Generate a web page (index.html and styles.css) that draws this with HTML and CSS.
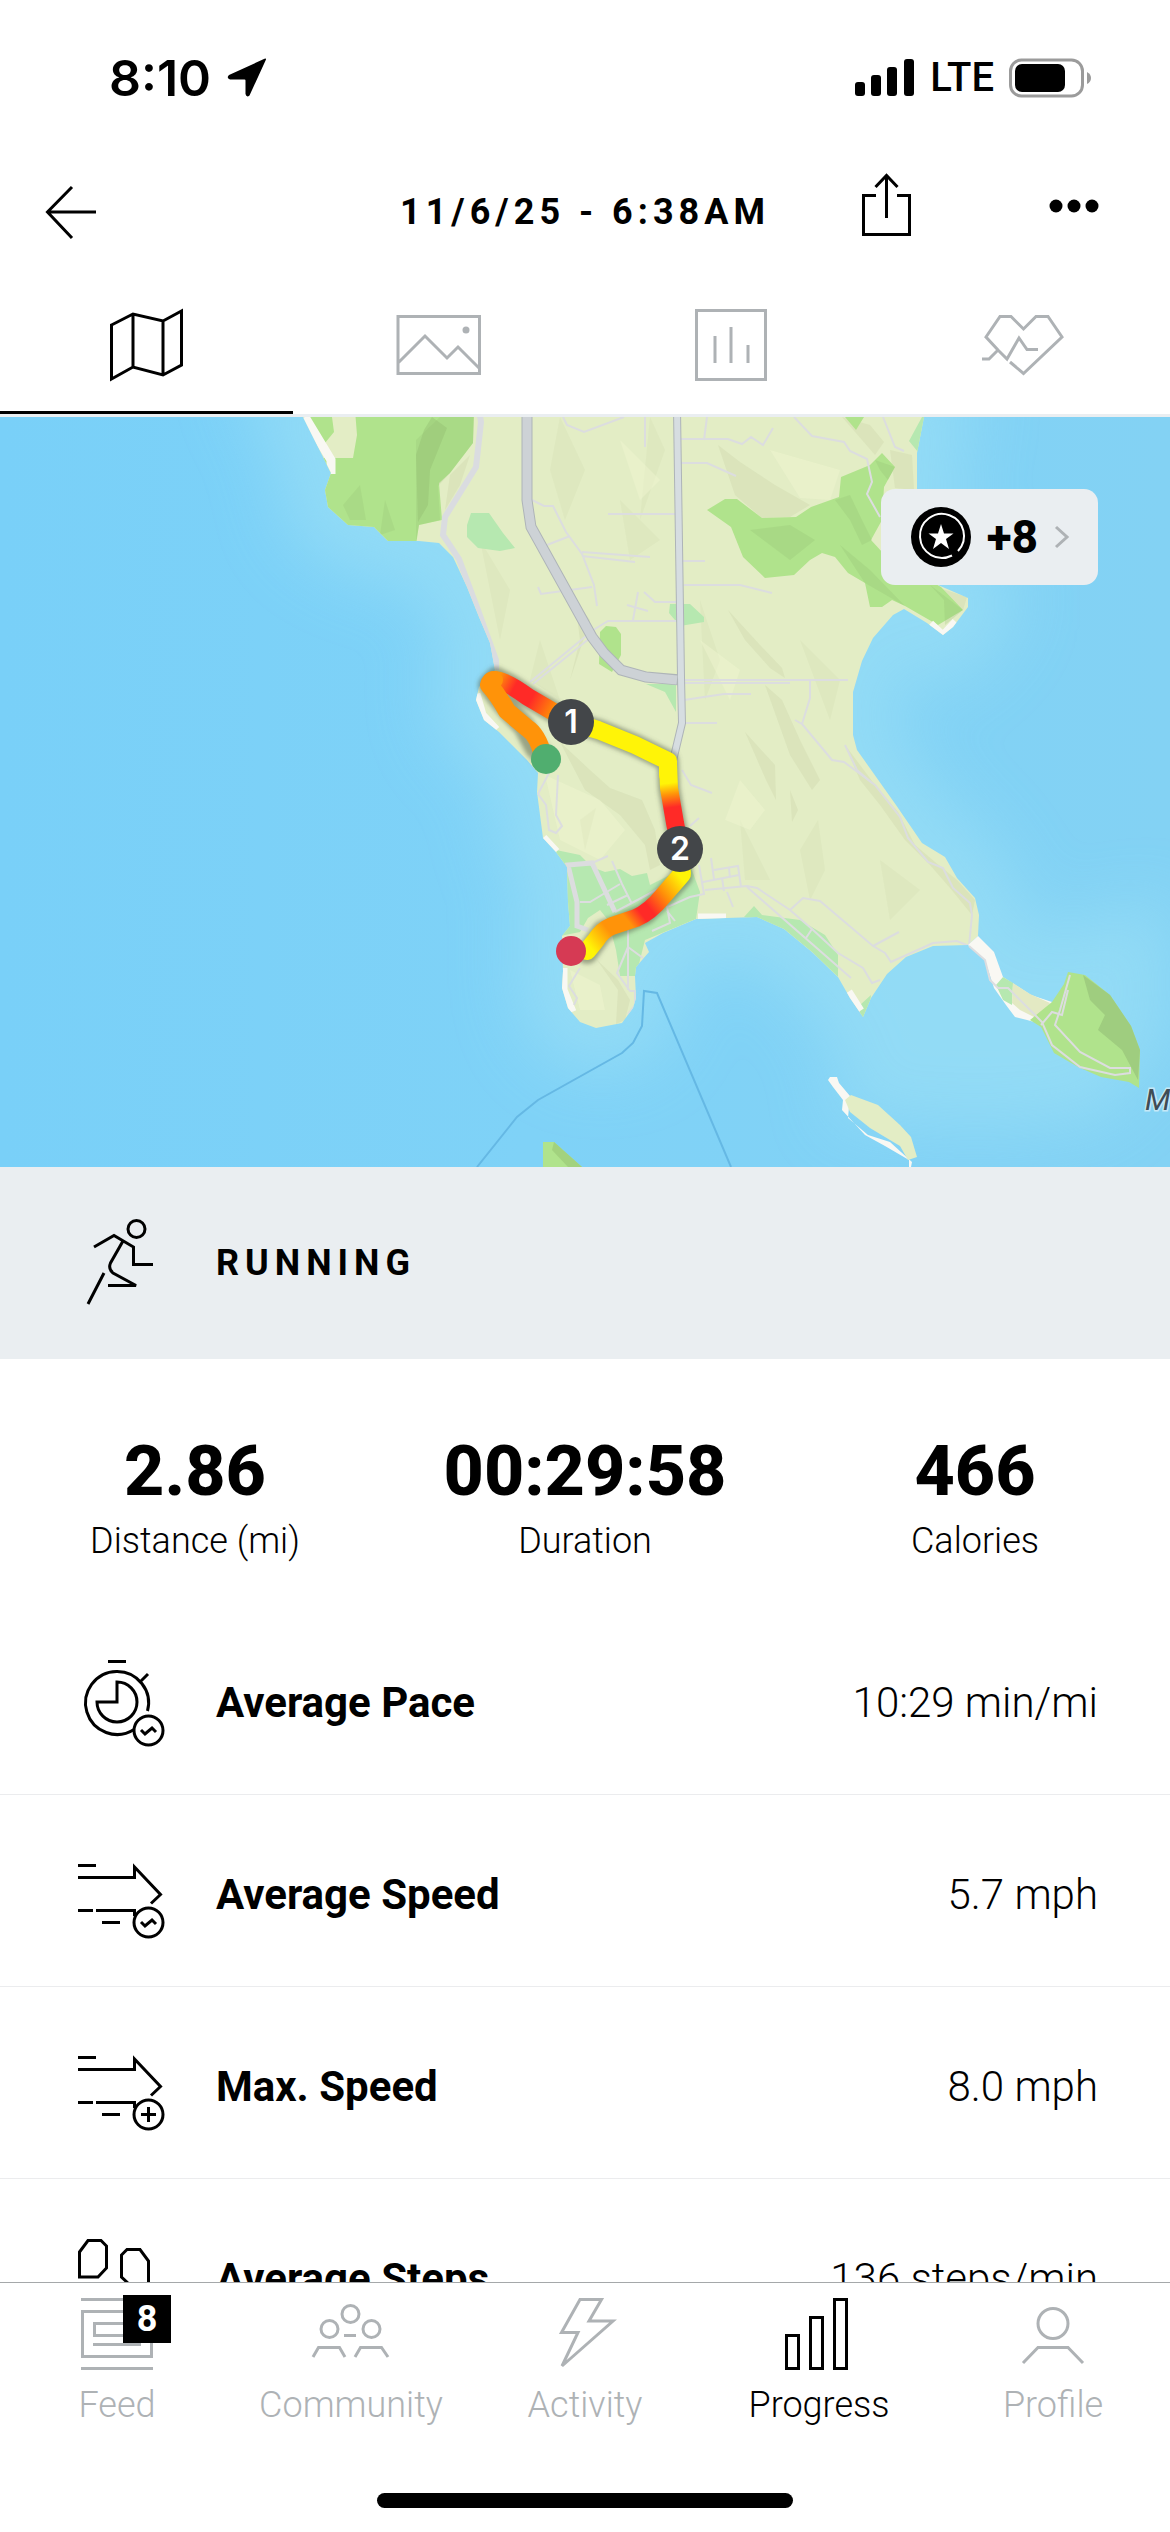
FILE: index.html
```html
<!DOCTYPE html>
<html lang="en">
<head>
    <meta charset="UTF-8">
    <meta name="viewport" content="width=device-width, initial-scale=1.0">
    <title>Running - 11/6/25</title>
    <link rel="stylesheet" href="styles.css">
</head>
<body>
<div class="app">

    <!-- Status bar -->
    <div class="status-bar">
        <span class="status-time">8:10</span>
        <svg class="status-location" width="40" height="40" viewBox="0 0 40 40">
            <path d="M39 1.500Q39.500 0 37.500 .8L2 17Q-1 20 3 21.500H17.500Q18.500 21.500 18.500 22.500V36Q19.500 40 22.500 37.500Z"/>
        </svg>
        <div class="status-right">
            <svg width="60" height="40" viewBox="0 0 60 40">
                <rect x="0" y="24" width="10" height="14" rx="3"/>
                <rect x="16" y="17" width="10" height="21" rx="3"/>
                <rect x="32" y="9" width="10" height="29" rx="3"/>
                <rect x="49" y="1" width="10" height="37" rx="3"/>
            </svg>
            <span class="status-network">LTE</span>
            <svg width="83" height="40" viewBox="0 0 83 40">
                <rect x="1.500" y="2" width="72" height="36" rx="11" fill="none" stroke="#9b9b9b" stroke-width="3"/>
                <rect x="6" y="6" width="50" height="28" rx="7"/>
                <path d="M78 14Q82 16 82 20T78 26Z" fill="#9b9b9b"/>
            </svg>
        </div>
    </div>

    <!-- Header -->
    <header class="header">
        <button class="icon-button" aria-label="Back">
            <svg class="line-icon" width="60" height="60" viewBox="0 0 60 60">
                <path d="M54 30H6M30 5L5.500 30 30 56"/>
            </svg>
        </button>
        <h1 class="title">11/6/25 - 6:38AM</h1>
        <div class="header-actions">
            <button class="icon-button" aria-label="Share">
                <svg class="line-icon" width="60" height="80" viewBox="0 0 60 80">
                    <path d="M20 23.500H7.500V62.500H53.500V23.500H41M30.500 46V4M19.500 15L30.500 3.500 41.500 15"/>
                </svg>
            </button>
            <button class="icon-button" aria-label="More">
                <svg width="60" height="80" viewBox="0 0 60 80">
                    <circle cx="12" cy="34" r="6.500"/>
                    <circle cx="30" cy="34" r="6.500"/>
                    <circle cx="48" cy="34" r="6.500"/>
                </svg>
            </button>
        </div>
    </header>

    <!-- Workout tabs -->
    <div class="tabs">
        <button class="tab active" aria-label="Map">
            <svg class="line-icon" width="96" height="80" viewBox="98 305 96 80">
                <path d="M111.500 325L133 314 163 321 181.500 311V365L163 375 133 367 111.500 379ZM133 314V367M163 321V375"/>
            </svg>
        </button>
        <button class="tab" aria-label="Photos">
            <svg class="line-icon" width="96" height="80" viewBox="391 305 96 80">
                <path d="M398 316.500H479.500V373.500H398ZM398 363L425 336 447 358 458 347 479 368"/>
                <circle cx="466" cy="330" r="3.500" fill="currentColor" stroke="none"/>
            </svg>
        </button>
        <button class="tab" aria-label="Charts">
            <svg class="line-icon" width="96" height="80" viewBox="683 305 96 80">
                <path d="M696.500 310.500H765.500V379.500H696.500ZM715 336V363M731 327V363M748 345V363"/>
            </svg>
        </button>
        <button class="tab" aria-label="Heart rate">
            <svg class="line-icon" width="96" height="80" viewBox="976 305 96 80">
                <path d="M998 350L986 337 1000 316.500H1011L1023.500 329 1036 316.500H1048L1062 337 1023.500 373.500 1010 362M982 359H989L998 350 1007 359 1019 338 1027 349.500H1038"/>
            </svg>
        </button>
    </div>

    <main class="content">

        <!-- Route map -->
        <div class="map">
            <svg class="map-canvas" viewBox="0 417 1170 750" preserveAspectRatio="xMidYMid slice" role="img" aria-label="Route map">
                <defs>
                    <linearGradient id="water" x1="0" x2="1" y1="0" y2="0">
                        <stop offset="0" stop-color="#79d0f8"/>
                        <stop offset=".45" stop-color="#7fd2f7"/>
                        <stop offset="1" stop-color="#83d2f4"/>
                    </linearGradient>
                    <linearGradient id="paceNorth" gradientUnits="userSpaceOnUse" x1="490" y1="678" x2="571" y2="722">
                        <stop offset=".08" stop-color="#ff9309"/>
                        <stop offset=".28" stop-color="#ff2a27"/>
                        <stop offset=".5" stop-color="#ff2a27"/>
                        <stop offset=".75" stop-color="#ff8409"/>
                        <stop offset="1" stop-color="#fff407"/>
                    </linearGradient>
                    <linearGradient id="paceEast" gradientUnits="userSpaceOnUse" x1="668" y1="761" x2="680" y2="848">
                        <stop offset=".25" stop-color="#fff407"/>
                        <stop offset=".38" stop-color="#ff9309"/>
                        <stop offset=".53" stop-color="#ff2a27"/>
                        <stop offset="1" stop-color="#ff2a27"/>
                    </linearGradient>
                    <linearGradient id="paceSouth" gradientUnits="userSpaceOnUse" x1="684" y1="876" x2="587" y2="953">
                        <stop offset=".03" stop-color="#fff407"/>
                        <stop offset=".22" stop-color="#ff8f09"/>
                        <stop offset=".38" stop-color="#ff2a27"/>
                        <stop offset=".46" stop-color="#ff2a27"/>
                        <stop offset=".58" stop-color="#ff9309"/>
                        <stop offset=".75" stop-color="#ff9309"/>
                        <stop offset=".95" stop-color="#fff407"/>
                    </linearGradient>
                    <filter id="haze" x="-30%" y="-30%" width="160%" height="160%">
                        <feGaussianBlur stdDeviation="32"/>
                    </filter>
                    <filter id="routeShadow" x="-20%" y="-20%" width="140%" height="140%">
                        <feGaussianBlur stdDeviation="2"/>
                    </filter>
                    <path id="land" d="M303 417L331 473 325 490 328 507 348 525 374 527 388 541 419 541 439 543 453 557 467 587 479 617 490 643 495 670 479 687 476 700 484 720 499 732 527 760 538 773 537 792 543 838 556 852 567 867 568 902 570 926 562 936 563 971 562 988 568 1008 580 1022 596 1028 622 1023 633 1008 636 998 635 976 636 967 649 952 645 943 663 933 696 919 757 917 784 929 812 952 838 977 850 998 863 1017 871 998 887 974 906 957 933 946 968 945 978 936 979 915 975 898 957 878 945 857 922 843 896 805 857 750 853 735 853 692 862 661 873 638 893 615 904 609 927 623 943 635 953 627 968 607 968 598 938 585 917 560 917 453 924 417Z"/>
                    <clipPath id="landClip">
                        <use href="#land"/>
                    </clipPath>
                </defs>

                <!-- Water, lighter near the shore -->
                <rect x="0" y="417" width="1170" height="750" fill="url(#water)"/>
                <g filter="url(#haze)" opacity=".75">
                    <use href="#land" fill="#98def6" stroke="#98def6" stroke-width="90"/>
                    <path fill="#98def6" d="M880 960L1170 900V1040L1100 1120 980 1130 830 1120Z"/>
                </g>

                <!-- Land -->
                <g clip-path="url(#landClip)">
                    <rect x="290" y="417" width="700" height="620" fill="#e3edc5"/>
                    <g fill="#a9b183" opacity=".14">
                        <path d="M718 445L740 462 775 485 810 505 790 517 762 518 735 495ZM842 417L870 425 884 442 875 455 862 440ZM890 450L912 455 914 490 895 488ZM930 585L967 597 963 610 941 598Z"/>
                        <path d="M728 610L760 645 782 668 785 678 770 668 745 640ZM765 685L782 700 800 740 820 780 812 790 790 755ZM745 732L775 765 776 800 766 780ZM790 790L798 810 792 822ZM845 745L875 785 898 812 915 845 935 862 957 880 975 900 972 915 950 888 930 865 905 840 880 805 860 780Z"/>
                        <path d="M560 742L590 770 610 788 642 800 655 830 660 865 650 870 645 845 620 815 585 790ZM580 820L596 808 585 850ZM597 960L618 980 630 1000 625 1020 616 1024 618 990ZM450 475L470 455 460 485 445 510ZM575 600L590 620 570 680 580 640Z"/>
                    </g>
                    <g fill="#a9b183" opacity=".08">
                        <path d="M650 417L665 450 640 520ZM560 417L585 470 565 520 550 470ZM540 640L560 700 530 680ZM700 600L720 660 705 700ZM620 500L660 540 630 560ZM800 640L840 680 830 720ZM800 850L818 820 825 870 810 900ZM740 820L770 880 745 880ZM880 860L920 890 890 920ZM480 540L510 590 500 640Z"/>
                    </g>
                    <g fill="#f0f7d0" opacity=".45">
                        <path d="M545 775L600 800 625 830 600 860 560 840ZM700 640L740 670 730 700ZM770 450L840 470 830 500 800 498ZM620 440L660 480 640 500ZM740 780L765 810 750 830 725 820ZM570 970L600 985 605 1010 580 1010Z"/>
                    </g>

                    <!-- Woods -->
                    <path fill="#b0e38c" d="M320 458L353 458 357 435 355 410H474L473 443 450 473 439 483 442 520 419 525 416 545H320ZM308 417H332L334 432 325 443Z"/>
                    <g fill="#8fb86c">
                        <path opacity=".2" d="M416 440L440 417H474L473 443 450 473 438 486 440 520 419 525 416 541ZM343 505L360 485 366 520 350 520ZM385 500L395 530 380 535Z"/>
                        <path opacity=".35" d="M416 455L424 430 432 417 447 428 430 470 428 505 418 522Z"/>
                    </g>
                    <path fill="#b0e38c" d="M707 510L725 499 737 499 762 518 796 517 811 507 839 497 841 477 870 465 882 453 895 467 884 487 882 520 871 540 883 553 920 575 941 587 963 610 938 625 905 606 892 600 882 607 870 607 865 583 848 573 835 557 822 553 810 560 794 575 765 578 743 557 731 527ZM845 417H864L856 430Z"/>
                    <g fill="#8fb86c" opacity=".22">
                        <path d="M835 500L850 495 862 520 872 540 862 545 850 520ZM875 460L895 467 888 480 880 470ZM930 585L963 610 945 625 944 600ZM750 530L790 525 815 540 790 560ZM840 545L870 570 905 606 865 583Z"/>
                    </g>

                    <!-- Parks -->
                    <g fill="#b6e8b0">
                        <path d="M467 525L471 513H489L503 533 515 548 500 551 478 548 467 537ZM670 604H690L704 617V622L680 626 669 613ZM646 684H676V712L665 692ZM909 441L922 417H930V452H918ZM556 850L580 855 592 867 605 872 620 869 632 876 647 873 650 885 690 865 700 892 696 919 645 940 636 976H620L616 950 608 920 600 910 588 918 580 932 560 936V890ZM744 917L754 906 762 915 800 920 825 935 838 955V977L812 952 784 929ZM860 1005L871 995 868 1018H860Z"/>
                    </g>
                    <path fill="#b0e38c" d="M600 632L606 626 616 627 621 634V655L612 672 599 664Z"/>

                    <!-- Beaches -->
                    <g fill="none" stroke="#f9f8f3" stroke-width="9">
                        <path d="M305 417L331 460V474M476 694L482 715 496 730M543 838L556 852M698 918H726M563 968V990L572 1012M848 992L860 1011M930 624L943 636 956 622"/>
                    </g>

                    <!-- Small streets -->
                    <g fill="none" stroke="#dcdddf" stroke-width="2">
                        <path d="M563 417L567 425 584 432 624 417M645 417V447M532 500L544 506H553L566 532 582 554 594 585 597 606M547 545L570 536M582 552L650 557M582 556L635 562M538 587L541 594 592 587M608 514H675M590 632L608 621H676M633 620L638 592M627 605L648 611M644 592L655 602H676M586 636L530 682M590 638L533 684M681 439H728L742 444 751 437 763 445 773 428M704 440L707 417M681 463H707L736 476M681 561H705M684 585H740L772 593M682 680H848M682 683H790M684 700L724 694H751M682 723H717M794 417L812 436 844 442 850 451 867 459 872 482 867 494 880 517M883 417L895 447 904 451M810 680V698L802 724 832 760 844 762 875 785 900 817 908 838 928 862 943 868 953 888 970 903 972 915 969 946"/>
                        <path d="M795 720L802 724M682 770L691 785 712 793M845 745L857 770 872 783M549 773L538 794 546 805 549 830 556 833 562 826 556 815 558 775M690 826L699 818"/>
                        <path d="M711 858L714 879M703 882L739 875M714 870L738 866 741 887M729 868L730 878M722 878L724 891M727 892L733 907M705 890L747 886 757 888 790 910 812 929 838 953 863 968 872 983 880 980M747 887L851 978M806 938L812 929M790 910L803 898 820 901 873 946 885 953 891 962 933 943 957 941 969 946M873 946L899 932M699 865L704 894 690 897 667 907 670 923 652 931M667 911L675 921M612 861L622 884 632 904M592 863L608 856M580 902H590L620 884M607 905L628 895M615 912L660 888M628 947L617 973 630 991H645M628 930V990M628 947L643 958M635 991V1005L628 1014M580 968L569 986 577 998 574 1005"/>
                    </g>
                    <path fill="none" stroke="#dcdddf" stroke-width="5" d="M588 930L577 926 577 902 568 865 592 863 615 912"/>

                    <!-- Main roads -->
                    <path class="road-minor" d="M479 410L481 422 476 467 445 517 443 535 459 559 478 610 496 660V670"/>
                    <path class="road-edge" d="M677 410L681 677 682 723 672 765"/>
                    <path class="road-edge wide" d="M527 410V500L531 527 592 637 604 653 621 670 646 677 681 680"/>
                    <path class="road-fill" d="M677 410L681 677 682 723 672 765"/>
                    <path class="road-fill wide" d="M527 410V500L531 527 592 637 604 653 621 670 646 677 677 680"/>
                </g>

                <!-- Islands -->
                <path fill="#f9f8f3" d="M978 936L994 952 1003 977 1031 995 1052 1002 1045 1025 1027 1020 1015 1017 1006 1005 994 988 985 960 968 945Z"/>
                <path fill="#b6e8b0" d="M1003 977L1013 983 1012 1005 1003 1000 996 985Z"/>
                <path fill="#e3e9c3" d="M1013 983L1030 994 1050 1003 1040 1020 1020 1010 1012 1003Z"/>
                <path fill="#b0e38c" d="M1068 972L1085 975 1110 995 1131 1026 1140 1050 1139 1088 1129 1082 1101 1077 1078 1067 1054 1053 1041 1027 1030 1020 1052 1002 1064 984Z"/>
                <path fill="#9fcd7f" d="M1083 975L1110 995 1131 1026 1140 1050 1138 1080 1122 1050 1098 1030 1105 1015 1090 1000Z"/>
                <path fill="none" stroke="#dcdddf" stroke-width="2" d="M969 946L985 960 990 980 998 988H1008L1030 1010 1042 1022 1052 1045 1080 1067 1115 1075 1130 1073V1068H1110L1080 1052 1055 1025 1060 1010 1070 975M1041 1025L1052 1012 1062 1015 1068 990"/>
                <path fill="#f9f8f3" d="M828 1080L830 1077H837L839 1083 850 1096 848 1118 868 1135 890 1142 912 1162 911 1167H909V1160L885 1146 865 1135 842 1110 843 1100 833 1087Z"/>
                <path fill="#e3edc5" d="M845 1100L851 1095 878 1105 900 1125 911 1137 917 1157 908 1160 900 1146 870 1128 850 1112Z"/>
                <path fill="#b0e38c" d="M543 1142H554L582 1167H543Z"/>
                <path fill="#a2d27e" d="M554 1142L582 1167H568L552 1150Z"/>

                <!-- Ferry routes -->
                <path fill="none" stroke="#65b8e4" stroke-width="2" d="M477 1167L517 1117 538 1100 622 1053 633 1043 642 1026 644 991 657 993 731 1167"/>

                <!-- Run route -->
                <g fill="none" stroke-linecap="round" stroke-linejoin="round">
                    <path filter="url(#routeShadow)" stroke="#5d6650" stroke-opacity=".55" stroke-width="22" d="M546 759L535 747 524 726 510 712 496 695 489 685 496 678 510 685 528 697 552 711 571 722 598 730 635 745 668 761 669 788 675 823 680 848 682 876 663 897 645 914 617 926 603 931 587 953"/>
                    <path stroke="url(#paceSouth)" stroke-width="18" d="M680 850L682 874 663 896Q650 912 636 918L612 926Q602 930 596 940L587 951"/>
                    <path stroke="url(#paceEast)" stroke-width="18" d="M668 764L669 788 675 823 680 848"/>
                    <path stroke="#fff407" stroke-width="18" d="M571 722L598 730 635 745 668 761V775"/>
                    <path stroke="url(#paceNorth)" stroke-width="18" d="M494 680Q505 680 528 697L552 711 571 722"/>
                    <path stroke="#ff9309" stroke-width="18" d="M543 756Q538 735 527 728L507 711Q498 695 489 685 490 680 494 680"/>
                </g>
                <circle cx="546" cy="759" r="15" fill="#50ae6f"/>
                <circle cx="571" cy="951" r="15" fill="#d63a54"/>
                <circle cx="571" cy="722" r="23" fill="#434649"/>
                <circle cx="680" cy="849" r="23" fill="#434649"/>
                <text class="mile" x="571" y="733">1</text>
                <text class="mile" x="680" y="860">2</text>
                <text class="place" x="1145" y="1110">M</text>
            </svg>

            <button class="achievements">
                <svg width="60" height="60" viewBox="0 0 60 60">
                    <circle cx="30" cy="30" r="30"/>
                    <path d="M41 48.500A22 22 0 1 1 47 44" fill="none" stroke="#fff" stroke-width="2"/>
                    <path d="M30 17L33 26.500H42.500L35 32 38 42 30 36 22 42 25 32 17.500 26.500H27Z" fill="#fff"/>
                </svg>
                <span>+8</span>
                <svg width="16" height="24" viewBox="0 0 16 24">
                    <path d="M2 2L13 12 2 22" fill="none" stroke="#aeb2b5" stroke-width="3"/>
                </svg>
            </button>
        </div>

        <!-- Activity type -->
        <div class="activity">
            <svg class="line-icon" width="96" height="96" viewBox="0 0 96 96">
                <circle cx="64.500" cy="14" r="8.500"/>
                <path d="M22 32L42 20.500 61.500 32V49.500H81M51 26L38.500 48Q36 54 41 58L64 70.500H36M32 58L16 89"/>
            </svg>
            <h2>RUNNING</h2>
        </div>

        <!-- Summary -->
        <div class="summary">
            <div class="summary-item"><strong>2.86</strong><span>Distance (mi)</span></div>
            <div class="summary-item"><strong>00:29:58</strong><span>Duration</span></div>
            <div class="summary-item"><strong>466</strong><span>Calories</span></div>
        </div>

        <!-- Details -->
        <ul class="details">
            <li class="detail">
                <svg class="line-icon" width="96" height="96" viewBox="0 3 96 96">
                    <path d="M36 9.500H54M76 22L69 29M75.500 59A31.500 31.500 0 1 0 62 77.500M45 50V30A20 20 0 1 1 25 50Z"/>
                    <circle cx="76.500" cy="78.500" r="14.500"/>
                    <path d="M69 78L73 82 80 76 84 80"/>
                </svg>
                <span class="detail-name">Average Pace</span>
                <span class="detail-value">10:29 min/mi</span>
            </li>
            <li class="detail">
                <svg class="line-icon" width="96" height="96" viewBox="0 3 96 96">
                    <path d="M6 21.500H24M6 33.500H62.500V23L88.500 50.500 79 59.500M6 66.500H21M24 66.500H62.500V72M30 78.500H48"/>
                    <circle cx="76.500" cy="78.500" r="14.500"/>
                    <path d="M69 78L73 82 80 76 84 80"/>
                </svg>
                <span class="detail-name">Average Speed</span>
                <span class="detail-value">5.7 mph</span>
            </li>
            <li class="detail">
                <svg class="line-icon" width="96" height="96" viewBox="0 3 96 96">
                    <path d="M6 21.500H24M6 33.500H62.500V23L88.500 50.500 79 59.500M6 66.500H21M24 66.500H62.500V72M30 78.500H48"/>
                    <circle cx="76.500" cy="78.500" r="14.500"/>
                    <path d="M69 78.500H84M76.500 71V86"/>
                </svg>
                <span class="detail-name">Max. Speed</span>
                <span class="detail-value">8.0 mph</span>
            </li>
            <li class="detail">
                <svg class="line-icon" width="96" height="96" viewBox="0 3 96 96">
                    <path d="M7.500 24L16 12.500H29L34.500 18V40L26 49H7.500ZM49.500 27L55 21.500H68L76.500 33V58H59L49.500 49Z"/>
                </svg>
                <span class="detail-name">Average Steps</span>
                <span class="detail-value">136 steps/min</span>
            </li>
        </ul>
    </main>

    <!-- Bottom navigation -->
    <nav class="tab-bar">
        <div class="tab-bar-items">
            <a class="nav-item" href="#feed">
                <svg class="line-icon" width="96" height="96" viewBox="0 0 96 96">
                    <path d="M12 13.500H84M13.500 25.500H82.500V70.500H13.500ZM25.500 37.500H70.500V49.500H25.500ZM24 58.500H72M12 82.500H84"/>
                </svg>
                <span class="badge">8</span>
                <span>Feed</span>
            </a>
            <a class="nav-item" href="#community">
                <svg class="line-icon" width="96" height="96" viewBox="0 0 96 96">
                    <circle cx="47.500" cy="28" r="8.500"/>
                    <circle cx="26.500" cy="43" r="8.500"/>
                    <circle cx="68.500" cy="43" r="8.500"/>
                    <path d="M41 49.500H53M10 71L15.500 61.500H36.500L42 71M52 71L57.500 61.500H78.500L85 71"/>
                </svg>
                <span>Community</span>
            </a>
            <a class="nav-item" href="#activity">
                <svg class="line-icon" width="96" height="96" viewBox="0 0 96 96">
                    <path d="M43 13.500H64.500L52 35H76L25 80 41 46.500H24.500Z"/>
                </svg>
                <span>Activity</span>
            </a>
            <a class="nav-item active" href="#progress">
                <svg class="line-icon" width="96" height="96" viewBox="0 0 96 96">
                    <path d="M15.500 49.500H27.500V82.500H15.500ZM39.500 31.500H51.500V82.500H39.500ZM63.500 13.500H75.500V82.500H63.500Z"/>
                </svg>
                <span>Progress</span>
            </a>
            <a class="nav-item" href="#profile">
                <svg class="line-icon" width="96" height="96" viewBox="0 0 96 96">
                    <circle cx="48" cy="37.500" r="15"/>
                    <path d="M18 77L33 61.500H63L78 77"/>
                </svg>
                <span>Profile</span>
            </a>
        </div>
        <div class="home-indicator"></div>
    </nav>

</div>
</body>
</html>
```
FILE: styles.css
```css
* {
    box-sizing: border-box;
}

body {
    margin: 0;
    background-color: #fff;
    color: #000;
    font-family: Roboto, "Liberation Sans", sans-serif;
    font-size: 36px;
    font-weight: 300;
}

button {
    margin: 0;
    padding: 0;
    border: none;
    background: none;
    color: inherit;
    font-family: inherit;
    cursor: pointer;
}

svg {
    display: block;
    flex: none;
}

.line-icon {
    fill: none;
    stroke: currentColor;
    stroke-width: 3;
}

.app {
    display: flex;
    flex-direction: column;
    height: 100vh;
}

/* Status bar */
.status-bar {
    display: flex;
    flex: none;
    align-items: center;
    height: 156px;
    padding: 0 78px 0 109px;
    font-family: Inter, sans-serif;
}

.status-time {
    font-size: 50px;
    font-weight: 600;
}

.status-location {
    margin-left: 16px;
}

.status-right {
    display: flex;
    align-items: center;
    gap: 15px;
    margin-left: auto;
}

.status-network {
    font-family: Roboto, sans-serif;
    font-size: 40px;
    font-weight: 500;
    line-height: 40px;
}

/* Header */
.header {
    display: grid;
    flex: none;
    grid-template-columns: 1fr auto 1fr;
    align-items: center;
    height: 112px;
    padding: 0 42px;
}

.title {
    margin: 0;
    font-size: 36px;
    font-weight: 700;
    letter-spacing: 5px;
}

.header-actions {
    display: flex;
    justify-content: flex-end;
    gap: 128px;
    padding-right: 24px;
}

/* Workout tabs */
.tabs {
    display: grid;
    flex: none;
    grid-template-columns: repeat(4, 1fr);
    border-bottom: 3px solid #eaeef1;
}

.tab {
    display: flex;
    justify-content: center;
    height: 146px;
    padding-top: 37px;
    border-bottom: 3px solid transparent;
    color: #aeb2b5;
}

.tab.active {
    border-bottom-color: #000;
    color: #000;
}

.content {
    flex: 1;
    min-height: 0;
    overflow: hidden;
}

/* Map */
.map {
    position: relative;
    height: 750px;
}

.map-canvas {
    width: 100%;
    height: 100%;
}

.road-minor,
.road-edge,
.road-fill {
    fill: none;
    stroke: #dadce0;
    stroke-width: 6;
}

.road-edge {
    stroke: #aeb4b8;
    stroke-width: 8;
}

.road-fill {
    stroke: #d6dde1;
}

.road-edge.wide {
    stroke-width: 11;
}

.road-fill.wide {
    stroke: #cdd2d6;
    stroke-width: 9;
}

.mile {
    fill: #fff;
    font-family: Inter, sans-serif;
    font-size: 32px;
    font-weight: 600;
    text-anchor: middle;
}

.place {
    fill: #3f4c55;
    stroke: #c4e8f7;
    stroke-width: 3;
    paint-order: stroke;
    font-size: 30px;
    font-style: italic;
    font-weight: 400;
}

.achievements {
    display: flex;
    position: absolute;
    top: 72px;
    right: 72px;
    align-items: center;
    gap: 16px;
    height: 96px;
    padding: 0 28px 0 30px;
    border-radius: 14px;
    background-color: #eaeef1;
    font-size: 46px;
    font-weight: 800;
}

/* Activity type */
.activity {
    display: flex;
    align-items: center;
    gap: 48px;
    height: 192px;
    padding: 0 72px;
    background-color: #eaeef1;
}

.activity h2 {
    margin: 0;
    font-size: 36px;
    font-weight: 700;
    letter-spacing: 6px;
}

/* Summary */
.summary {
    display: grid;
    grid-template-columns: repeat(3, 1fr);
    height: 244px;
    padding-top: 72px;
    text-align: center;
}

.summary-item strong,
.summary-item span {
    display: block;
}

.summary-item strong {
    margin-bottom: 8px;
    font-size: 70px;
    font-weight: 800;
    line-height: 80px;
}

.summary-item span {
    line-height: 44px;
}

/* Details */
.details {
    margin: 0;
    padding: 0;
    list-style: none;
}

.detail {
    display: flex;
    align-items: center;
    gap: 48px;
    height: 192px;
    padding: 8px 72px 0;
    border-bottom: 1px solid #ebecee;
    font-size: 42px;
}

.detail-name {
    font-weight: 700;
}

.detail-value {
    margin-left: auto;
}

/* Bottom navigation */
.tab-bar {
    display: flex;
    flex: none;
    flex-direction: column;
    height: 250px;
    border-top: 1px solid #a5a8aa;
    background-color: #fff;
}

.tab-bar-items {
    display: grid;
    grid-template-columns: repeat(5, 1fr);
    padding-top: 3px;
}

.nav-item {
    display: flex;
    position: relative;
    flex-direction: column;
    align-items: center;
    color: #aeb2b5;
    line-height: 46px;
    text-decoration: none;
}

.nav-item.active {
    color: #000;
}

.badge {
    position: absolute;
    top: 9px;
    left: calc(50% + 6px);
    width: 48px;
    height: 48px;
    background-color: #000;
    color: #fff;
    font-weight: 700;
    line-height: 48px;
    text-align: center;
}

.home-indicator {
    width: 416px;
    height: 15px;
    margin: auto auto 24px;
    border-radius: 8px;
    background-color: #000;
}
```
